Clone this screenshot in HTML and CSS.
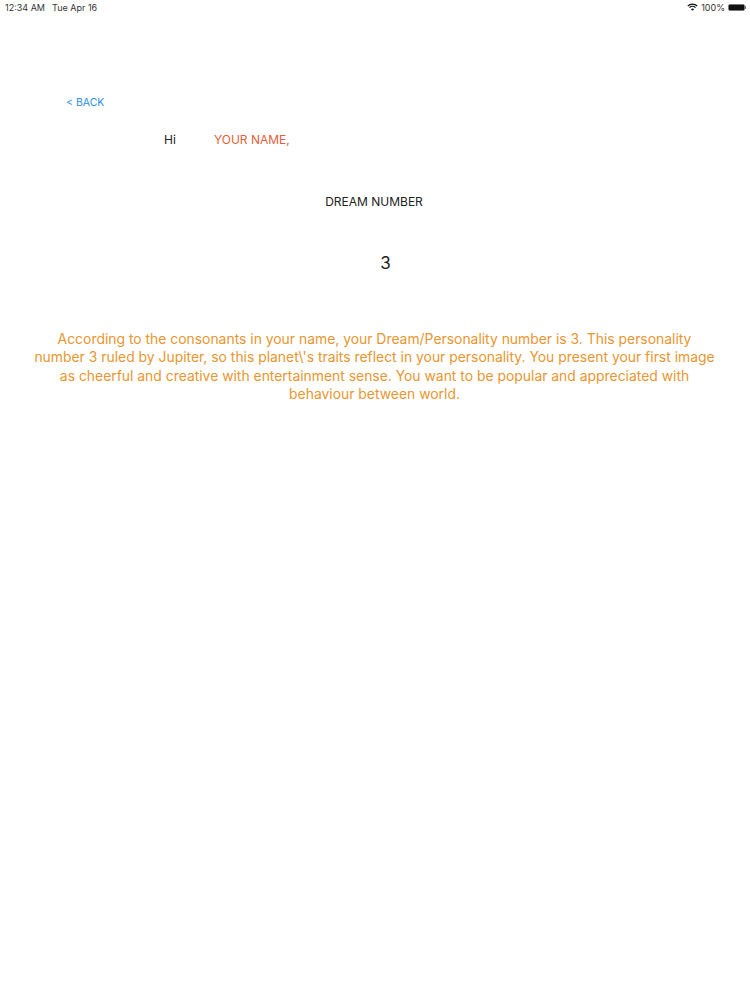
FILE: index.html
```html
<!DOCTYPE html>
<html lang="en">

<head>
  <meta charset="UTF-8">
  <meta name="viewport" content="width=device-width, initial-scale=1.0">
  <title>Dream Number</title>
  <link rel="stylesheet" href="styles.css">
</head>

<body>

  <!-- Status bar -->
  <div class="status-bar">
    <div class="status-left">
      <span>12:34 AM</span>
      <span>Tue Apr 16</span>
    </div>
    <div class="status-right">
      <svg class="wifi" viewBox="0 0 12 9">
        <path d="M0.7 3.3 A7.6 7.6 0 0 1 11.3 3.3" />
        <path d="M2.6 5.2 A4.9 4.9 0 0 1 9.4 5.2" />
        <path class="wifi-dot" d="M6 8.8 L4.2 7 A2.5 2.5 0 0 1 7.8 7 Z" />
      </svg>
      <span>100%</span>
      <div class="battery"><div class="battery-level"></div></div>
      <div class="battery-tip"></div>
    </div>
  </div>

  <a class="back" href="#">&lt; BACK</a>

  <div class="greeting">
    <span class="hi">Hi</span>
    <span class="name">YOUR NAME,</span>
  </div>

  <h1 class="title">DREAM NUMBER</h1>
  <div class="number">3</div>

  <p class="description">According to the consonants in your name, your Dream/Personality number is 3. This personality number 3 ruled by Jupiter, so this planet\'s traits reflect in your personality. You present your first image as cheerful and creative with entertainment sense. You want to be popular and appreciated with behaviour between world.</p>

</body>

</html>
```

FILE: styles.css
```css
/* Page */
body {
  margin: 0;
  height: 1000px;
  background-color: #fff;
  color: #222;
  font-family: Inter, "Liberation Sans", sans-serif;
  overflow: hidden;
}

/* Status bar */
.status-bar {
  display: flex;
  justify-content: space-between;
  align-items: center;
  height: 14px;
  padding: 0 4px 0 5px;
  font-size: 9px;
  color: #333;
}
.status-left {
  display: flex;
  gap: 7px;
}
.status-right {
  display: flex;
  align-items: center;
  gap: 3px;
}
.wifi {
  width: 11px;
  height: 8px;
  fill: none;
  stroke: #111;
  stroke-width: 1.4;
}
.wifi .wifi-dot {
  fill: #111;
  stroke: none;
}
.battery {
  width: 17px;
  height: 7px;
  border: 1px solid #777;
  box-sizing: border-box;
  border-radius: 2px;
}
.battery-level {
  height: 100%;
  background-color: #111;
}
.battery-tip {
  width: 1px;
  height: 3px;
  margin-left: -3px;
  background-color: #777;
}

/* Back link */
.back {
  display: block;
  margin: 82px 0 0 66px;
  font-size: 10.5px;
  line-height: 13px;
  color: #2b8fdc;
  text-decoration: none;
}

/* Greeting */
.greeting {
  display: flex;
  margin: 23px 0 0 164px;
  font-size: 12px;
  line-height: 16px;
}
.hi {
  width: 50px;
}
.name {
  color: #e2603a;
}

/* Result */
.title {
  margin: 46px 0 0;
  padding-right: 2px;
  font-size: 12px;
  font-weight: 400;
  line-height: 16px;
  text-align: center;
}
.number {
  margin-top: 42px;
  padding-left: 21px;
  font-size: 17px;
  line-height: 22px;
  text-align: center;
}
.description {
  margin: 56px 0 0;
  padding: 0 33px 0 32px;
  font-size: 13.9px;
  line-height: 18.4px;
  text-align: center;
  color: #e8962f;
}
```
